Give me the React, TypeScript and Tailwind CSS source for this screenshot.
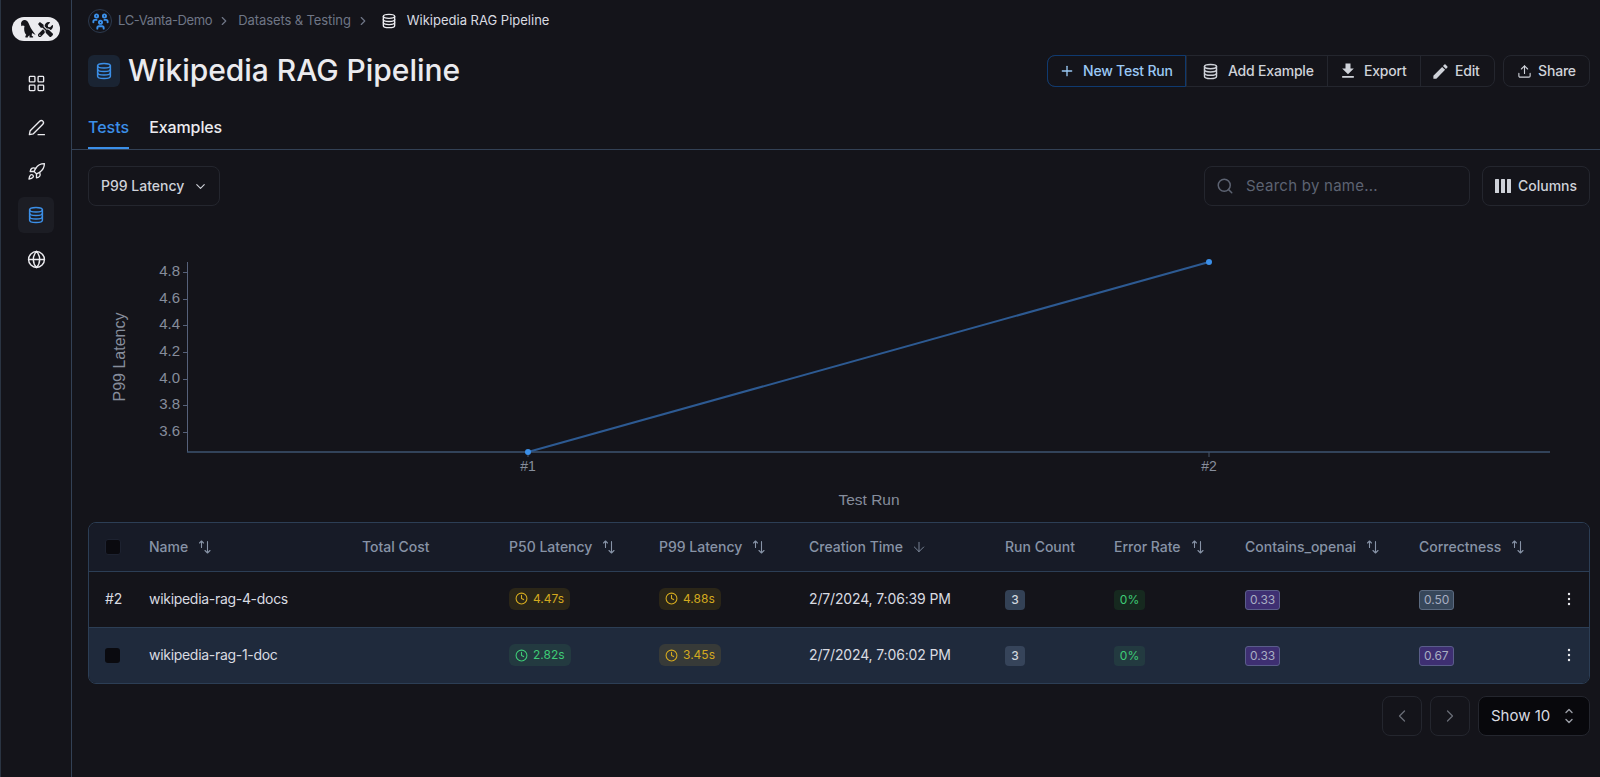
import React from "react";
import { ArrowDown, ChevronDown, ChevronLeft, ChevronRight, Clock, Globe, LayoutGrid, Plus, Rocket, Search, Upload } from "lucide-react";
import { FaTools } from "react-icons/fa";
import { MdEdit, MdFileDownload } from "react-icons/md";
import { TbUsersGroup } from "react-icons/tb";

function Db({ className }: { className?: string }) {
  return (
    <svg viewBox="0 0 24 24" fill="none" stroke="currentColor" strokeWidth="2" strokeLinecap="round" className={className}>
      <ellipse cx="12" cy="5" rx="8.5" ry="3" />
      <path d="M3.5 5v14c0 1.7 3.8 3 8.5 3s8.500-1.300 8.500-3V5" />
      <path d="M3.500 9.700c0 1.700 3.800 3 8.500 3s8.500-1.300 8.500-3" />
      <path d="M3.500 14.400c0 1.700 3.800 3 8.500 3s8.500-1.300 8.500-3" />
    </svg>
  );
}

function PenLineIcon({ className }: { className?: string }) {
  return (
    <svg viewBox="0 0 24 24" fill="none" stroke="currentColor" strokeWidth="1.7" strokeLinecap="round" strokeLinejoin="round" className={className}>
      <path d="M3 21l1-5L16 4c1.200-1.200 3-1.200 4 0s1.200 2.800 0 4L8 20l-5 1z" />
      <path d="M14 21h8" />
    </svg>
  );
}

function SortIcon() {
  return (
    <svg viewBox="0 0 14 14" fill="none" stroke="currentColor" strokeWidth="1.1" strokeLinecap="round" strokeLinejoin="round" className="ml-[10px] h-[14px] w-[14px] shrink-0 text-[#8793a6]">
      <path d="M3.500 7.500V1M1.500 3l2-2 2 2" />
      <path d="M9.500 1.500V13M7 10.500l2.500 2.500 2.500-2.500" />
    </svg>
  );
}

function Logo() {
  return (
    <div className="flex h-[24px] w-[48px] items-center justify-center gap-[1px] rounded-full bg-[#ebebef] text-[#15151a]">
      <svg viewBox="0 0 16 18" className="h-[18px] w-[17px]" fill="currentColor">
        <path d="M0.500 3.500C0.800 1.400 2.300 0 4.200 0.100c1.900.1 3 1.300 3.800 3l2 4.300c1 1.900 2.800 4.400 5.200 7.700l-3.700-2.200-.3 2.800 1.400.9v1h-3.500l-.2-2.300-1.600 1.400v.9H5l-.2-1.500 1-1C3.500 12.500 3.300 9 4 6 3.200 5.300 1.800 5 .9 6.200z" />
      </svg>
      <FaTools className="h-[15px] w-[15px]" />
    </div>
  );
}

function Sidebar() {
  const item = "flex h-[36px] w-[36px] items-center justify-center rounded-md";
  return (
    <aside className="flex h-full w-[72px] shrink-0 flex-col items-center border-l border-r border-l-[#2a3442] border-r-[#334155] pt-[17px] text-[#ebebef]">
      <Logo />
      <div className="mt-[24px] flex flex-col items-center gap-[8px]">
        <div className={item}><LayoutGrid className="h-[19px] w-[19px]" strokeWidth={1.7} /></div>
        <div className={item}><PenLineIcon className="h-[19px] w-[19px]" /></div>
        <div className={item}><Rocket className="h-[19px] w-[19px]" strokeWidth={1.7} /></div>
        <div className={`${item} bg-[#1c1d24] text-[#3b8fe8]`}><Db className="h-[18px] w-[18px]" /></div>
        <div className={item}><Globe className="h-[19px] w-[19px]" strokeWidth={1.8} /></div>
      </div>
    </aside>
  );
}

function Breadcrumb() {
  return (
    <div className="flex h-[24px] items-center text-[13px] text-[#6f7686]">
      <div className="flex h-[24px] w-[24px] items-center justify-center rounded-full border border-[#2c3a4f] text-[#3b8fe8]">
        <TbUsersGroup className="h-[19px] w-[19px]" strokeWidth={2.4} />
      </div>
      <span className="ml-[6px] tracking-[-0.35px]">LC-Vanta-Demo</span>
      <ChevronRight className="ml-[5px] mr-[7px] h-[14px] w-[14px]" />
      <span className="tracking-[-0.1px]">Datasets &amp; Testing</span>
      <ChevronRight className="ml-[5px] mr-[11px] h-[14px] w-[14px]" />
      <Db className="h-[16px] w-[16px] text-[#ebebef]" />
      <span className="ml-[10px] text-[#d9dbe1]">Wikipedia RAG Pipeline</span>
    </div>
  );
}

function Actions() {
  const seg = "flex h-full items-center border-l border-[#24262e] text-[#cfd2d9]";
  return (
    <div className="flex items-center gap-[8px] text-sm font-medium tracking-[-0.2px]">
      <div className="flex h-[32px] items-center rounded-lg border border-[#24262e]">
        <div className="-my-px -ml-px flex h-[32px] w-[139px] items-center rounded-l-lg border border-[#0f3a70] pl-[11px] text-[#9bc9f5]">
          <Plus className="h-[16px] w-[16px]" strokeWidth={2} />
          <span className="ml-[8px]">New Test Run</span>
        </div>
        <div className={`${seg} w-[141px] pl-[15px]`}>
          <Db className="h-[17px] w-[17px]" />
          <span className="ml-[9px]">Add Example</span>
        </div>
        <div className={`${seg} w-[93px] pl-[10px]`}>
          <MdFileDownload className="h-[20px] w-[20px]" />
          <span className="ml-[6px]">Export</span>
        </div>
        <div className={`${seg} w-[74px] pl-[10px]`}>
          <MdEdit className="h-[19px] w-[19px]" />
          <span className="ml-[5px]">Edit</span>
        </div>
      </div>
      <div className="flex h-[32px] w-[87px] items-center justify-center rounded-lg border border-[#24262e] text-[#cfd2d9]">
        <Upload className="h-[15px] w-[15px]" strokeWidth={1.8} />
        <span className="ml-[6px]">Share</span>
      </div>
    </div>
  );
}

function Toolbar() {
  return (
    <div className="mt-[16px] flex items-center justify-between">
      <div className="flex h-[40px] w-[132px] items-center rounded-lg border border-[#24262e] pl-[12px] text-sm font-medium text-[#cfd2d9]">
        <span>P99 Latency</span>
        <ChevronDown className="ml-[9px] h-[15px] w-[15px]" strokeWidth={1.8} />
      </div>
      <div className="flex items-center gap-[12px]">
        <div className="flex h-[40px] w-[266px] items-center rounded-lg border border-[#24262e] pl-[11px] text-[#5d6372]">
          <Search className="h-[18px] w-[18px]" strokeWidth={2} />
          <span className="ml-[12px] text-[15px] tracking-[0.25px]">Search by name...</span>
        </div>
        <div className="flex h-[40px] w-[108px] items-center justify-center rounded-lg border border-[#24262e] text-sm font-medium text-[#cfd2d9]">
          <svg viewBox="0 0 16 14" className="mr-[7px] h-[14px] w-[16px]" fill="currentColor">
            <rect x="0" y="0" width="4" height="14" rx="0.5" />
            <rect x="6" y="0" width="4" height="14" rx="0.5" />
            <rect x="12" y="0" width="4" height="14" rx="0.5" />
          </svg>
          Columns
        </div>
      </div>
    </div>
  );
}

function Chart() {
  const ticks = [
    ["4.8", 66], ["4.6", 93], ["4.4", 119], ["4.2", 146], ["4.0", 173], ["3.8", 199], ["3.6", 226],
  ] as const;
  return (
    <svg width="1502" height="316" viewBox="0 0 1502 316" className="block" fontFamily="'Liberation Sans', Arial, sans-serif" fontSize="14" fill="#868d9c">
      <path d="M99.500 56V246" stroke="#56617a" strokeWidth="1" fill="none" />
      <path d="M99 246H1462" stroke="#3c5370" strokeWidth="1.500" fill="none" />
      {ticks.map(([t, y]) => (
        <g key={t}>
          <path d={`M95 ${y + 0.5}H99`} stroke="#56617a" />
          <text x="92" y={y + 4} textAnchor="end" fontSize="15">{t}</text>
        </g>
      ))}
      <path d="M440 246v5M1121 246v5" stroke="#475569" />
      <text x="440" y="265" textAnchor="middle">#1</text>
      <text x="1121" y="265" textAnchor="middle">#2</text>
      <text x="781" y="299" textAnchor="middle" fontSize="15.500">Test Run</text>
      <text transform="translate(37 151) rotate(-90)" textAnchor="middle" fontSize="16">P99 Latency</text>
      <path d="M440 246L1121 56" stroke="#2d5a92" strokeWidth="2" fill="none" />
      <circle cx="440" cy="246" r="3" fill="#3b8fe8" />
      <circle cx="1121" cy="56" r="3" fill="#3b8fe8" />
    </svg>
  );
}

function Latency({ v, tone }: { v: string; tone: "y" | "yh" | "g" }) {
  const cls = tone === "y" ? "bg-[#2b2618] text-[#d3a91f]" : tone === "yh" ? "bg-[#373a38] text-[#d3a91f]" : "bg-[#233a40] text-[#3ecb76]";
  return (
    <span className={`inline-flex h-[22px] items-center rounded-md px-[6px] text-xs ${cls}`}>
      <Clock className="h-[13px] w-[13px]" strokeWidth={2} />
      <span className="ml-[5px]">{v}</span>
    </span>
  );
}

function Count({ hl }: { hl?: boolean }) {
  return <span className={`inline-flex h-[20px] w-[20px] items-center justify-center rounded text-xs font-medium text-[#d0d5dd] ${hl ? "bg-[#36445a]" : "bg-[#334155]"}`}>3</span>;
}

function ErrorBadge({ hl }: { hl?: boolean }) {
  return <span className={`inline-flex h-[20px] w-[31px] items-center justify-center rounded text-xs text-[#3ecb76] ${hl ? "bg-[#233a40]" : "bg-[#16291f]"}`}>0%</span>;
}

function Score({ v, tone }: { v: string; tone: "p" | "s" }) {
  const cls = tone === "p" ? "border-[#5a5d8a] bg-[#3e2f72]" : "border-[#5b6a80] bg-[#37475a]";
  return <span className={`inline-flex h-[20px] items-center rounded-[3px] border px-[4px] text-xs text-[#a8aec2] ${cls}`}>{v}</span>;
}

function Th({ label, sort, arrow }: { label: string; sort?: boolean; arrow?: boolean }) {
  return (
    <th className="px-0 text-left text-sm font-medium text-[#8793a6]">
      <div className="flex items-center">
        <span>{label}</span>
        {sort && <SortIcon />}
        {arrow && <ArrowDown className="ml-[8px] h-[16px] w-[16px]" strokeWidth={1.3} />}
      </div>
    </th>
  );
}

function Kebab() {
  return (
    <svg viewBox="0 0 4 14" className="h-[14px] w-[4px] text-[#ebebef]" fill="currentColor">
      <circle cx="2" cy="2" r="1.200" />
      <circle cx="2" cy="7" r="1.200" />
      <circle cx="2" cy="12" r="1.200" />
    </svg>
  );
}

function Table() {
  return (
    <div className="overflow-hidden rounded-lg border border-[#2c3e55]">
      <table className="w-full table-fixed border-collapse">
        <colgroup>
          <col className="w-[60px]" />
          <col className="w-[213px]" />
          <col className="w-[147px]" />
          <col className="w-[150px]" />
          <col className="w-[150px]" />
          <col className="w-[196px]" />
          <col className="w-[109px]" />
          <col className="w-[131px]" />
          <col className="w-[174px]" />
          <col className="w-[128px]" />
          <col />
        </colgroup>
        <thead>
          <tr className="h-[48px] border-b border-[#2c3e55] bg-[#171b27]">
            <th className="pl-[16px] text-left">
              <div className="h-[16px] w-[16px] rounded-[3px] border border-[#1d2230] bg-[#0a0a0f]" />
            </th>
            <Th label="Name" sort />
            <Th label="Total Cost" />
            <Th label="P50 Latency" sort />
            <Th label="P99 Latency" sort />
            <Th label="Creation Time" arrow />
            <Th label="Run Count" />
            <Th label="Error Rate" sort />
            <Th label="Contains_openai" sort />
            <Th label="Correctness" sort />
            <th />
          </tr>
        </thead>
        <tbody className="text-sm text-[#d9dbe1]">
          <tr className="h-[56px] border-b border-[#2c3e55]">
            <td className="pl-[16px] text-[#d9dbe1]">#2</td>
            <td className="tracking-[-0.3px]">wikipedia-rag-4-docs</td>
            <td />
            <td><Latency v="4.47s" tone="y" /></td>
            <td><Latency v="4.88s" tone="y" /></td>
            <td className="tracking-[-0.15px]">2/7/2024, 7:06:39 PM</td>
            <td><Count /></td>
            <td><ErrorBadge /></td>
            <td><Score v="0.33" tone="p" /></td>
            <td><Score v="0.50" tone="s" /></td>
            <td><div className="flex justify-center pl-[2px]"><Kebab /></div></td>
          </tr>
          <tr className="h-[56px] bg-[#1f2a3c]">
            <td className="pl-[16px]">
              <div className="h-[15px] w-[15px] rounded-[3px] bg-[#0a0a0f]" />
            </td>
            <td className="tracking-[-0.3px]">wikipedia-rag-1-doc</td>
            <td />
            <td><Latency v="2.82s" tone="g" /></td>
            <td><Latency v="3.45s" tone="yh" /></td>
            <td className="tracking-[-0.15px]">2/7/2024, 7:06:02 PM</td>
            <td><Count hl /></td>
            <td><ErrorBadge hl /></td>
            <td><Score v="0.33" tone="p" /></td>
            <td><Score v="0.67" tone="p" /></td>
            <td><div className="flex justify-center pl-[2px]"><Kebab /></div></td>
          </tr>
        </tbody>
      </table>
    </div>
  );
}

function Pagination() {
  const b = "flex h-[40px] w-[40px] items-center justify-center rounded-lg border border-[#24262e] text-[#6a6d76]";
  return (
    <div className="mt-[12px] flex justify-end gap-[8px]">
      <div className={b}><ChevronLeft className="h-[20px] w-[20px]" strokeWidth={1.5} /></div>
      <div className={b}><ChevronRight className="h-[20px] w-[20px]" strokeWidth={1.5} /></div>
      <div className="flex h-[40px] w-[112px] items-center rounded-lg border border-[#24262e] bg-[#08080c] pl-[12px] text-[15px] text-[#d9dbe1]">
        <span>Show 10</span>
        <svg viewBox="0 0 8 16" fill="none" stroke="currentColor" strokeWidth="1.400" strokeLinecap="round" strokeLinejoin="round" className="ml-[15px] h-[16px] w-[8px] text-[#9a9da6]">
          <path d="M1 4.500L4 1.500l3 3" />
          <path d="M1 11.500l3 3 3-3" />
        </svg>
      </div>
    </div>
  );
}

export default function App() {
  return (
    <div className="flex h-[777px] w-[1600px] overflow-hidden bg-[#14141a] font-['Inter',sans-serif]">
      <Sidebar />
      <main className="min-w-0 flex-1 pt-[9px]">
        <div className="pl-[16px] pr-[10px]">
          <Breadcrumb />
          <div className="mt-[22px] flex h-[32px] items-center justify-between">
            <div className="flex items-center">
              <div className="flex h-[32px] w-[32px] items-center justify-center rounded-md bg-[#1a2433] text-[#3b8fe8]">
                <Db className="h-[18px] w-[18px]" />
              </div>
              <h1 className="ml-[8px] -translate-y-px text-[30px] font-medium leading-[36px] tracking-[-0.05px] text-[#ebebef]">Wikipedia RAG Pipeline</h1>
            </div>
            <Actions />
          </div>
        </div>
        <div className="mt-[22px] flex h-[41px] gap-[20px] border-b border-[#334155] pl-[16px] text-base font-medium">
          <div className="flex h-[40px] items-center border-b-2 border-[#3b8fe8] pb-[2px] text-[#3b8fe8]">Tests</div>
          <div className="flex h-[40px] items-center pb-[4px] text-[#ebebef] tracking-[-0.1px]">Examples</div>
        </div>
        <div className="pl-[16px] pr-[10px]">
          <Toolbar />
          <Chart />
          <Table />
          <Pagination />
        </div>
      </main>
    </div>
  );
}
